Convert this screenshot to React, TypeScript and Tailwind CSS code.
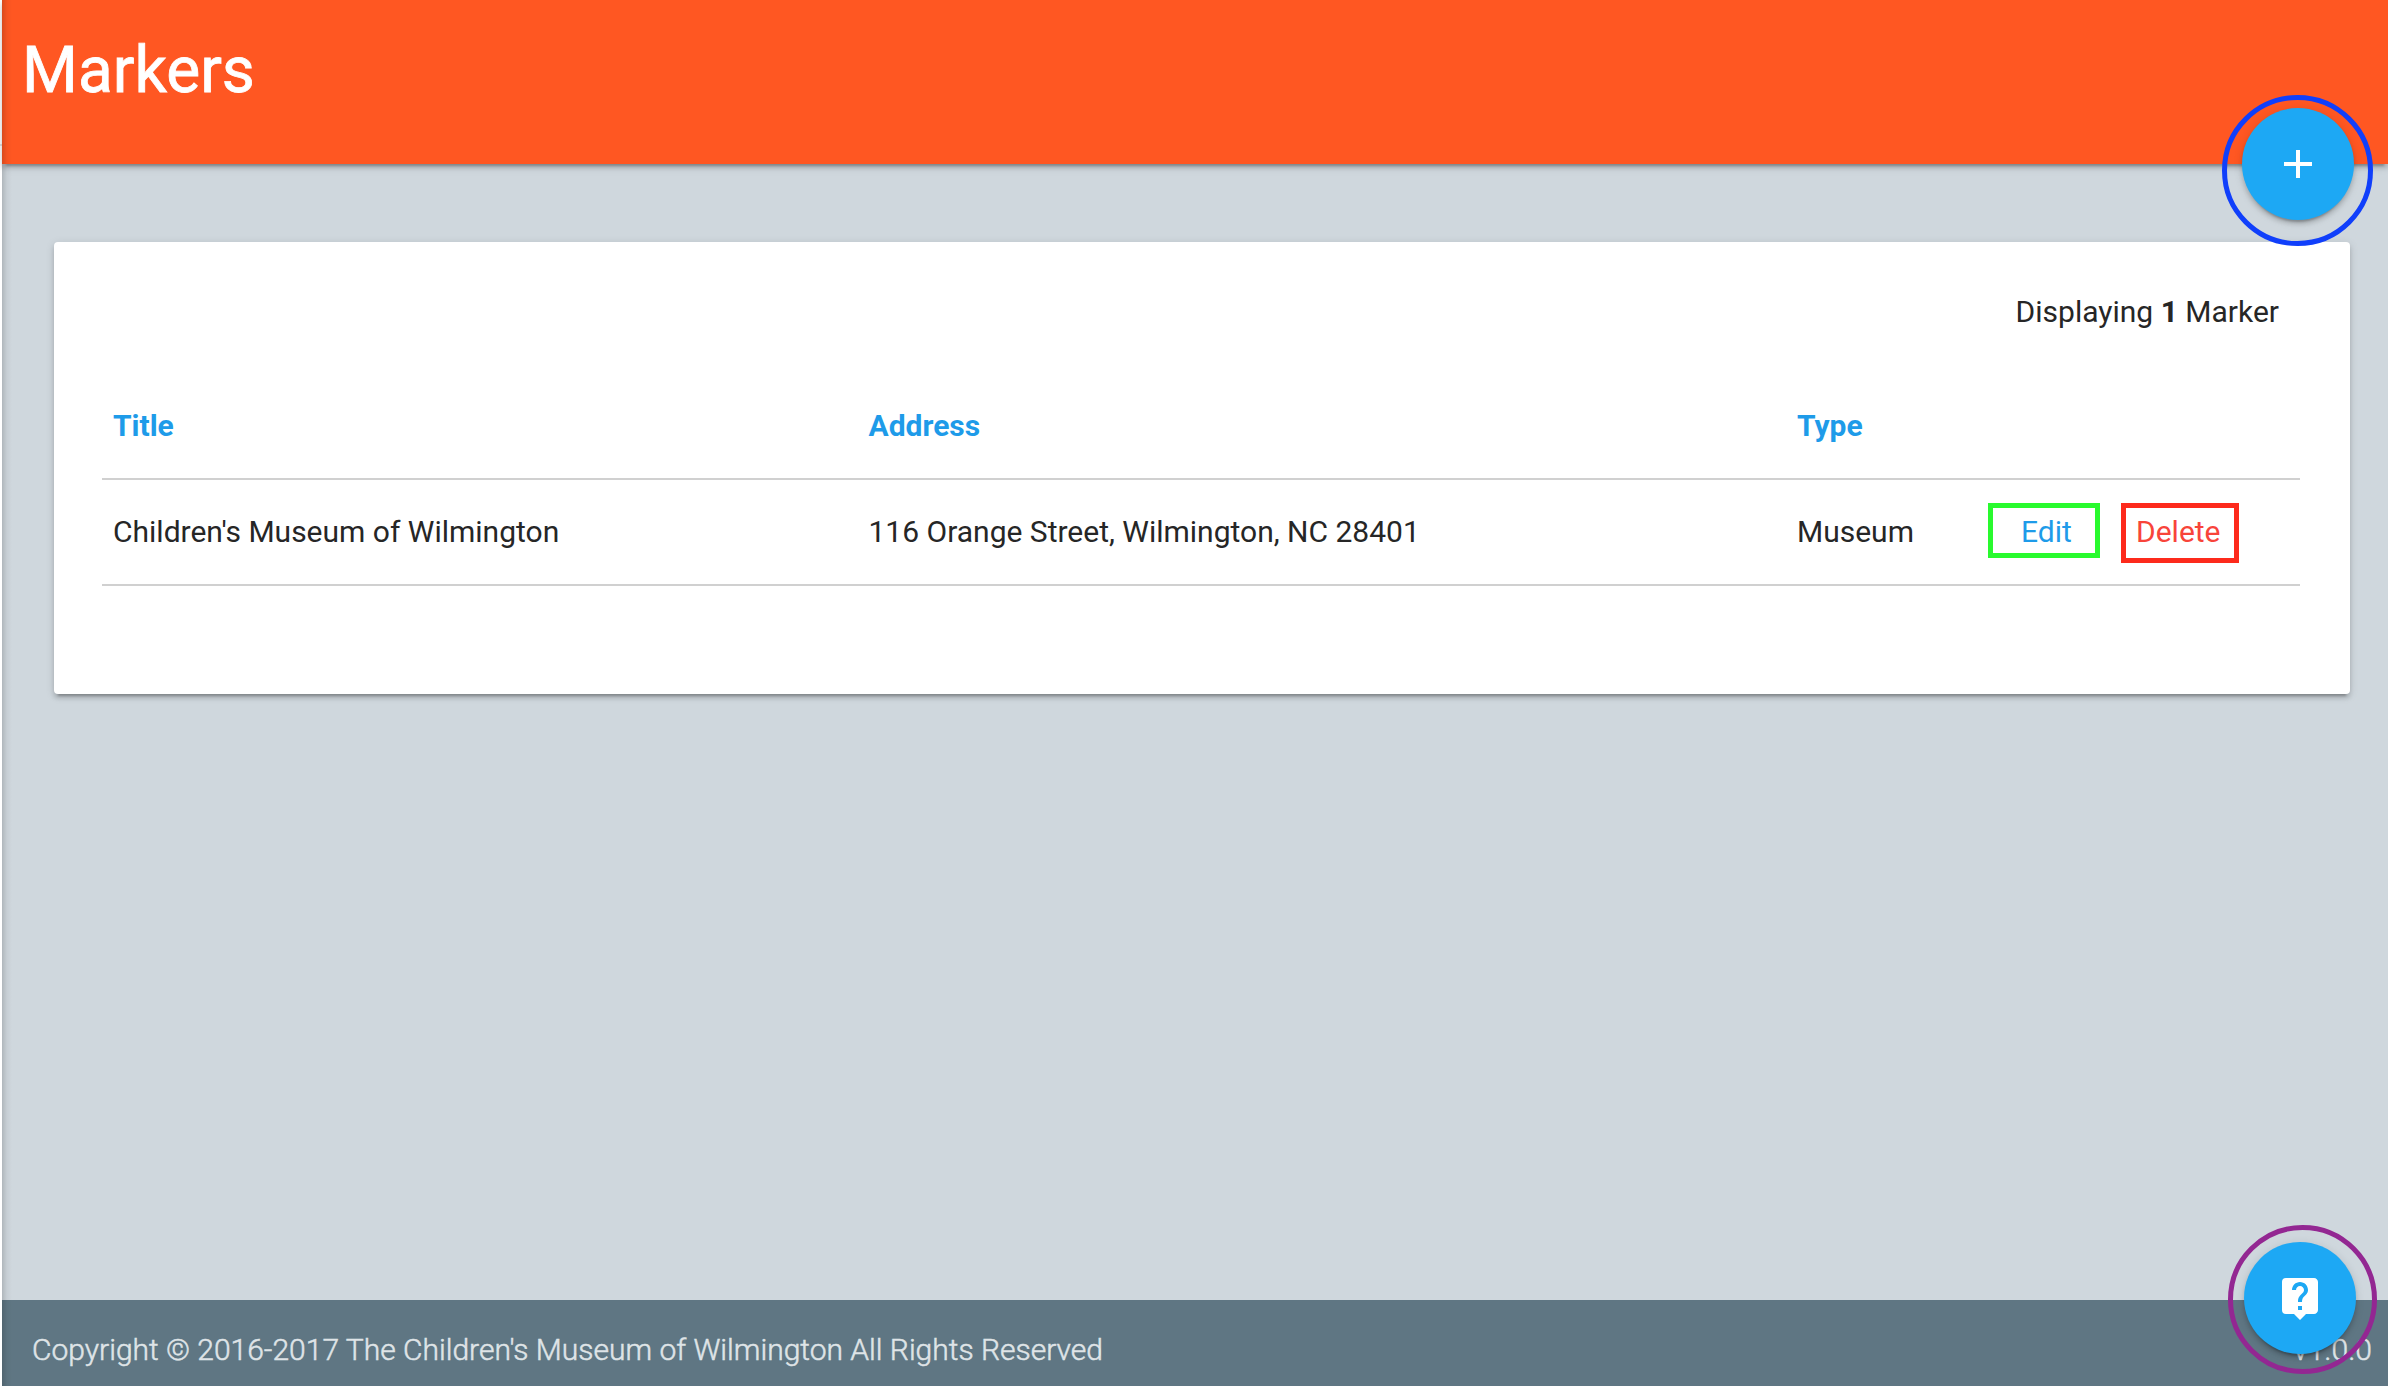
import React from "react";
import { MdAdd, MdLiveHelp } from "react-icons/md";

const depth =
  "shadow-[0_4px_4px_0_rgba(0,0,0,0.14),0_2px_10px_0_rgba(0,0,0,0.12),0_6px_2px_-4px_rgba(0,0,0,0.2)]";

const columns = "grid grid-cols-[755.5px_928.5px_191px_1fr]";

const markers = [
  {
    title: "Children's Museum of Wilmington",
    address: "116 Orange Street, Wilmington, NC 28401",
    type: "Museum",
  },
];

function Header() {
  return (
    <header className={`relative h-[164px] shrink-0 bg-[#ff5722] pl-[20px] ${depth}`}>
      <h1 className="pt-[33px] text-[64px] leading-[76px] font-normal text-white [-webkit-text-stroke:0.8px_white]">
        Markers
      </h1>
    </header>
  );
}

function MarkerTable() {
  return (
    <div className="mt-[44px]">
      <div className={`${columns} h-[106px] items-center border-b-2 border-[#d0d0d0] pl-[11px] font-bold text-[#1e9be9]`}>
        <span>Title</span>
        <span>Address</span>
        <span>Type</span>
      </div>
      {markers.map((m) => (
        <div key={m.title} className={`${columns} h-[106px] items-center border-b-2 border-[#d0d0d0] pl-[11px]`}>
          <span>{m.title}</span>
          <span>{m.address}</span>
          <span>{m.type}</span>
          <span className="mt-[1px] flex items-start gap-[21px] self-start pt-[22px] leading-[36px]">
            <a className="h-[55px] w-[112px] border-[5px] border-[#29fa2e] pt-[6px] pl-[28px] text-[#1e9be9]">Edit</a>
            <a className="h-[60px] w-[118px] border-[5px] border-[#fd2a1c] pt-[6px] pl-[10px] text-[#f8443a]">Delete</a>
          </span>
        </div>
      ))}
    </div>
  );
}

export default function App() {
  return (
    <div className="relative flex h-[1386px] w-[2388px] overflow-hidden bg-white font-[Roboto,sans-serif] text-[30px] leading-[36px] text-[#262626]">
      <div className="w-[2px] shrink-0 pt-[144px]">
        <div className="h-[2px] bg-[#e0e0e0]" />
      </div>
      <div className="relative flex flex-1 flex-col bg-[#cfd7dd]">
        <Header />
        <main className="flex-1 pt-[78px] pr-[38px] pl-[52px]">
          <section className={`h-[452px] rounded-[4px] bg-white pt-[50px] pr-[50px] pl-[48px] ${depth}`}>
            <p className="mt-[2px] pr-[21px] text-right">
              Displaying <b>1</b> Marker
            </p>
            <MarkerTable />
          </section>
        </main>
        <footer className="flex h-[86px] shrink-0 items-start justify-between bg-[#5f7683] pt-[32px] pr-[16px] pl-[30px] font-light text-[#dfe4e7] [-webkit-text-stroke:0.5px_#dfe4e7]">
          <span>Copyright © 2016-2017 The Children's Museum of Wilmington All Rights Reserved</span>
          <span>v1.0.0</span>
        </footer>
        <div className="pointer-events-none absolute inset-y-0 left-0 w-[10px] bg-linear-to-r from-black/15 via-black/4 to-transparent" />
      </div>

      <button className={`absolute top-[108px] left-[2242px] flex size-[112px] items-center justify-center rounded-full bg-[#1da8f4] pr-[1px] text-white ${depth}`}>
        <MdAdd size={48} />
      </button>
      <div className="absolute top-[95px] left-[2222px] size-[151px] rounded-full border-[5px] border-[#103ffb]" />

      <button className={`absolute top-[1242px] left-[2244px] flex size-[112px] items-center justify-center rounded-full bg-[#1da8f4] pr-[1px] text-white ${depth}`}>
        <MdLiveHelp size={48} />
      </button>
      <div className="absolute top-[1225px] left-[2228px] size-[149px] rounded-full border-[5px] border-[#932792]" />
    </div>
  );
}
